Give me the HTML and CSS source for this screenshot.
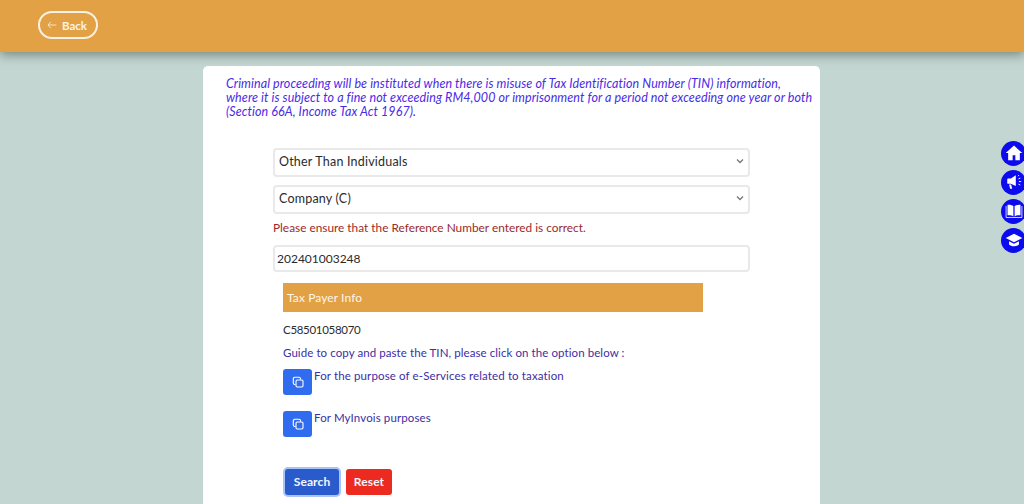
FILE: index.html
```html
<!DOCTYPE html>
<html lang="en">
<head>
<meta charset="utf-8">
<title>Tax Payer Info</title>
<link rel="stylesheet" href="styles.css">
</head>
<body>
<header class="topbar">
  <a class="back" href="#"><svg class="back-arrow" viewBox="0 0 12 10"><path d="M4.500 1 1 5l3.500 4M1 5h10.500" fill="none" stroke="currentColor" stroke-width="1"/></svg>Back</a>
</header>
<main class="stage">
  <section class="card">
    <p class="warning">Criminal proceeding will be instituted when there is misuse of Tax Identification Number (TIN) information,<br>where it is subject to a fine not exceeding RM4,000 or imprisonment for a period not exceeding one year or both<br>(Section 66A, Income Tax Act 1967).</p>
    <form class="form">
      <div class="field select">Other Than Individuals<svg class="chev" viewBox="0 0 8 6"><path d="M1 1.500 4 4.500 7 1.500" fill="none" stroke="currentColor" stroke-width="1.300"/></svg></div>
      <div class="field select">Company (C)<svg class="chev" viewBox="0 0 8 6"><path d="M1 1.500 4 4.500 7 1.500" fill="none" stroke="currentColor" stroke-width="1.300"/></svg></div>
      <p class="notice">Please ensure that the Reference Number entered is correct.</p>
      <div class="field plain">202401003248</div>
      <div class="result">
        <div class="result-head">Tax Payer Info</div>
        <div class="tin">C58501058070</div>
        <div class="guide">Guide to copy and paste the TIN, please click on the option below :</div>
        <div class="copy-row">
          <button type="button" class="copy"><svg viewBox="0 0 12 12"><path d="M3.500 8.500H2.800A1.500 1.500 0 0 1 1.300 7V2.800A1.500 1.500 0 0 1 2.800 1.300H7A1.500 1.500 0 0 1 8.500 2.800v.7" fill="none" stroke="currentColor" stroke-width="1.100"/><rect x="4" y="4" width="7" height="7" rx="1.200" fill="none" stroke="currentColor" stroke-width="1.100"/></svg></button>
          <span class="copy-label">For the purpose of e-Services related to taxation</span>
        </div>
        <div class="copy-row">
          <button type="button" class="copy"><svg viewBox="0 0 12 12"><path d="M3.500 8.500H2.800A1.500 1.500 0 0 1 1.300 7V2.800A1.500 1.500 0 0 1 2.800 1.300H7A1.500 1.500 0 0 1 8.500 2.800v.7" fill="none" stroke="currentColor" stroke-width="1.100"/><rect x="4" y="4" width="7" height="7" rx="1.200" fill="none" stroke="currentColor" stroke-width="1.100"/></svg></button>
          <span class="copy-label">For MyInvois purposes</span>
        </div>
      </div>
      <div class="actions">
        <button type="button" class="btn search">Search</button>
        <button type="button" class="btn reset">Reset</button>
      </div>
    </form>
  </section>
</main>
<nav class="side">
  <a class="side-btn" href="#"><svg viewBox="0 0 20 20"><path d="M10 1.800 .8 10h2.700v8h5v-5.500h3V18h5v-8h2.700z" fill="#fff"/></svg></a>
  <a class="side-btn" href="#"><svg viewBox="0 0 20 20"><path d="M12 2.500v12L6.500 12H3.500a1 1 0 0 1-1-1V7a1 1 0 0 1 1-1h3zM4.500 12.800h2.300l1.200 4.700H5.700z" fill="#fff"/><path d="M14.500 3.500l1-1.200M15 6.500l2-.8M15.500 9.500h2.500M15 12.500l2 .8" stroke="#fff" stroke-width="1"/></svg></a>
  <a class="side-btn" href="#"><svg viewBox="0 0 20 20"><path d="M9.300 4.500C7.500 3.200 5 2.800 2.800 3v11.800c2.400-.2 4.800.1 6.500 1.200zM10.700 4.500c1.800-1.300 4.300-1.700 6.500-1.500v11.800c-2.400-.2-4.800.1-6.500 1.200z" fill="#fff"/><path d="M1.200 4.500v12.700h17.600V4.500" fill="none" stroke="#fff" stroke-width=".9"/></svg></a>
  <a class="side-btn" href="#"><svg viewBox="0 0 20 20"><path d="M10 3 .8 7.800 10 12.600l9.200-4.800z" fill="#fff"/><path d="M4.500 11.300v3.700c1.300 1.400 3.200 2 5.500 2s4.200-.6 5.500-2v-3.700L10 14.200z" fill="#fff"/></svg></a>
</nav>
</body>
</html>
```
FILE: styles.css
```css
* { box-sizing: border-box; }
html, body { margin: 0; height: 504px; overflow: hidden; }
body { background: #c3d6d1; font-family: "Lato", "Liberation Sans", sans-serif; font-size: 13px; color: #222; position: relative; }
.topbar { height: 52px; background: #e3a145; box-shadow: 0 3px 10px rgba(60,70,60,.55); padding: 11px 38px; position: relative; }
.back { display: inline-flex; align-items: center; height: 28px; width: 60px; border: 2px solid #f8f1e4; border-radius: 15px; color: #fbf3e6; text-decoration: none; font-size: 11.500px; font-weight: 700; padding-left: 7px; }
.back-arrow { width: 10px; height: 8px; margin-right: 5px; }
.stage { display: flex; padding: 14px 0 0 203px; }
.card { width: 617px; height: 460px; background: #fff; border-radius: 5px; padding: 11px 0 0 23px; }
.warning { margin: 0; font-style: italic; color: #4a2be8; font-size: 12.500px; line-height: 14px; letter-spacing: .08px; white-space: nowrap; }
.form { padding: 28.500px 0 0 47px; width: 524px; }
.field { width: 477px; background: #fff; border: 2px solid #e9e9e9; border-radius: 4px; color: #2b2b2b; display: flex; align-items: center; justify-content: space-between; }
.select { height: 29px; padding: 0 4px 2px 4px; margin-bottom: 8px; font-size: 12.500px; letter-spacing: .2px; }
.plain { height: 27.500px; padding: 0 2px; font-size: 12px; }
.chev { width: 8px; height: 6px; color: #777; }
.notice { margin: -1.500px 0 8.500px; color: #9c2a2a; font-size: 11.850px; line-height: 16px; }
.result { padding: 11px 0 0 10px; width: 430px; }
.result-head { height: 29px; width: 419.500px; background: #e3a145; color: #fdf6ea; font-size: 12px; display: flex; align-items: center; padding-left: 4px; letter-spacing: .1px; }
.tin { margin-top: 10px; font-size: 11.500px; line-height: 15px; color: #2b2b2b; letter-spacing: -.3px; }
.guide { margin-top: 7.500px; font-size: 11.500px; line-height: 15px; color: #3c2ea5; letter-spacing: .08px; }
.copy-row { display: flex; align-items: flex-start; gap: 2px; margin-top: 9px; height: 26px; font-size: 11.500px; line-height: 15px; color: #3c2ea5; letter-spacing: .13px; }
.copy-row + .copy-row { margin-top: 16px; }
.copy-label { margin-top: -1px; }
.copy { width: 29px; height: 26px; background: #2f6cf0; color: #fff; border: 0; border-radius: 3px; padding: 0; display: flex; align-items: center; justify-content: center; }
.copy svg { width: 12px; height: 12px; }
.actions { display: flex; gap: 7px; margin: 32.500px 0 0 12px; }
.btn { height: 26px; border: 0; border-radius: 3px; color: #f4f6ff; font-family: inherit; font-size: 12px; font-weight: 700; padding: 0 0 2px; letter-spacing: .1px; }
.search { width: 54px; background: #2a5bcd; box-shadow: 0 0 0 2px #a9c4f7; }
.reset { width: 46px; background: #ec2a20; }
.side { position: absolute; top: 140.500px; right: -2px; display: flex; flex-direction: column; gap: 4px; }
.side-btn { width: 25px; height: 25px; border-radius: 50%; background: #0c0bee; display: flex; align-items: center; justify-content: center; }
.side-btn svg { width: 18px; height: 18px; }
```
